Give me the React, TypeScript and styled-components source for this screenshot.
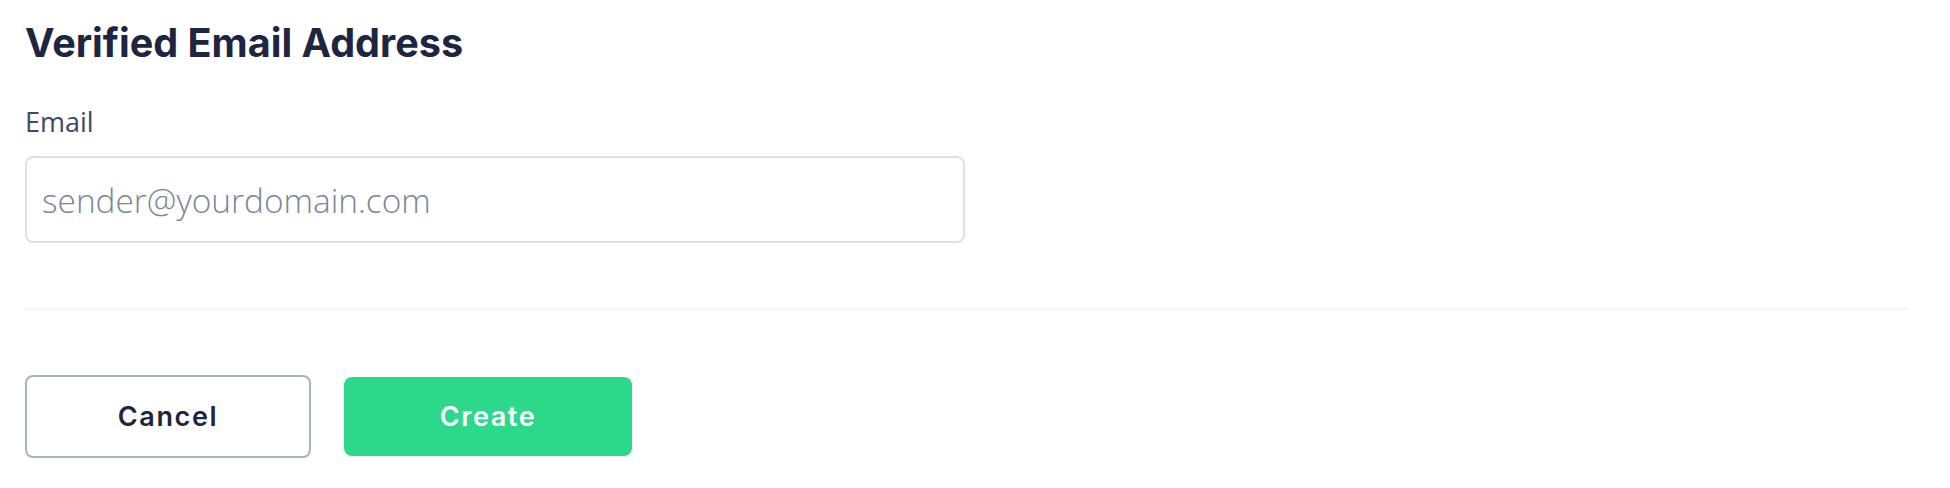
import React from "react";
import styled, { createGlobalStyle } from "styled-components";

const GlobalStyle = createGlobalStyle`
  html, body {
    margin: 0;
    padding: 0;
    background: #ffffff;
  }
  * { box-sizing: border-box; }
`;

const Page = styled.div`
  padding: 14px 42px 0 25px;
  display: flex;
  flex-direction: column;
`;

const Title = styled.h2`
  margin: 0;
  font-family: "Inter", "Lato", sans-serif;
  font-weight: 700;
  font-size: 39.6px;
  line-height: 58px;
  color: #1e2540;
  letter-spacing: 0;
`;

const Field = styled.div`
  display: flex;
  flex-direction: column;
  margin-top: 35px;
`;

const Label = styled.label`
  font-family: "Open Sans", sans-serif;
  font-size: 27px;
  line-height: 30px;
  color: #3f4a5e;
`;

const Input = styled.input`
  margin-top: 19px;
  width: 940px;
  height: 87px;
  border: 2px solid #dde0ec;
  border-radius: 8px;
  padding: 0 15px;
  font-family: "Open Sans", sans-serif;
  font-weight: 300;
  font-size: 33.4px;
  color: #1e2540;
  outline: none;
  &::placeholder {
    color: #7a869a;
    opacity: 1;
  }
`;

const Divider = styled.hr`
  margin: 65px 0 0;
  border: 0;
  height: 2px;
  background: #f2f5fa;
`;

const Actions = styled.div`
  display: flex;
  align-items: center;
  gap: 33px;
  margin-top: 65px;
`;

const Button = styled.button<{ $primary?: boolean }>`
  font-family: "Inter", sans-serif;
  font-weight: 600;
  font-size: 27px;
  letter-spacing: 1.6px;
  cursor: pointer;
  border-radius: 8px;
  width: ${(p) => (p.$primary ? "288px" : "286px")};
  height: ${(p) => (p.$primary ? "79px" : "83px")};
  border: ${(p) => (p.$primary ? "none" : "2px solid #aab2c0")};
  background: ${(p) => (p.$primary ? "#2cd98a" : "#ffffff")};
  color: ${(p) => (p.$primary ? "#ffffff" : "#1e2540")};
`;

export default function App() {
  return (
    <>
      <GlobalStyle />
      <Page>
        <Title>Verified Email Address</Title>
        <Field>
          <Label htmlFor="email">Email</Label>
          <Input id="email" type="email" placeholder="sender@yourdomain.com" />
        </Field>
        <Divider />
        <Actions>
          <Button type="button">Cancel</Button>
          <Button type="button" $primary>
            Create
          </Button>
        </Actions>
      </Page>
    </>
  );
}
